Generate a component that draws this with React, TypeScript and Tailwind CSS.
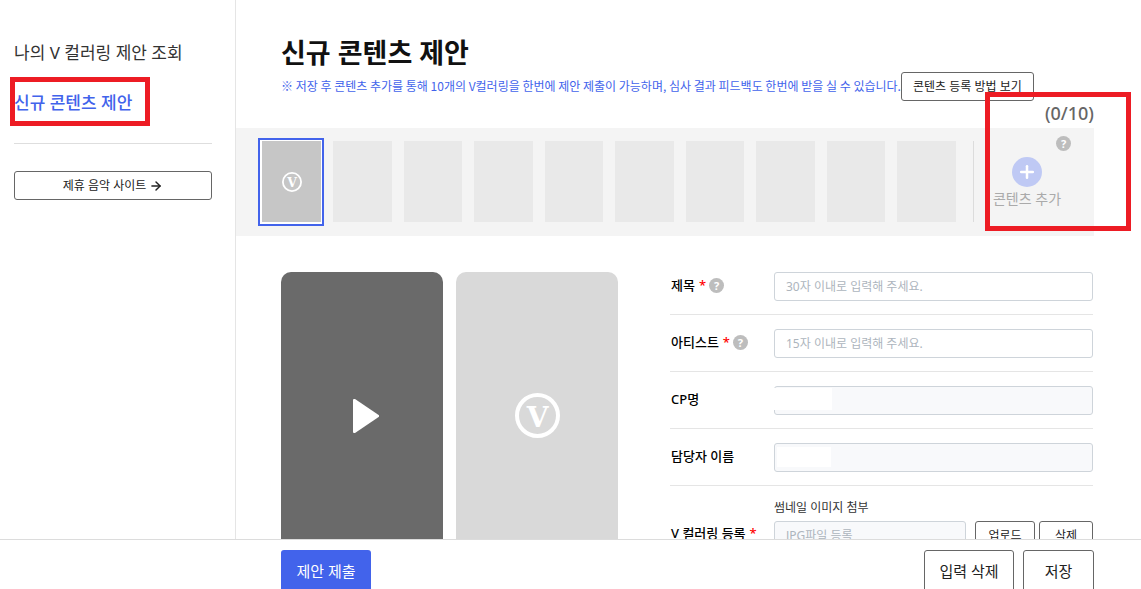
import { useState } from 'react';
import { ArrowRight, Plus } from 'lucide-react';

const EMPTY_SLOTS = 9;

/* ── Round V emblem ── */
function VLogo({ className }: { className: string }) {
  return (
    <svg viewBox="0 0 45 45" className={className} aria-hidden="true">
      <circle cx="22.5" cy="22.5" r="20.5" fill="none" stroke="#fff" strokeWidth="4" />
      <text
        x="22.5"
        y="33.5"
        textAnchor="middle"
        fill="#fff"
        fontSize="28"
        fontWeight="700"
        fontFamily="'DejaVu Serif', serif"
      >
        V
      </text>
    </svg>
  );
}

function HelpButton({ label }: { label: string }) {
  return (
    <button
      type="button"
      aria-label={label}
      className="flex size-[15px] items-center justify-center rounded-full bg-[#bdbdbd] text-[11px] leading-none font-bold text-white"
    >
      ?
    </button>
  );
}

type FieldProps = {
  id: string;
  label: string;
  required?: boolean;
  placeholder?: string;
  maskClass?: string;
};

function Field({ id, label, required, placeholder, maskClass }: FieldProps) {
  return (
    <div className="flex border-b border-[#e5e5e5] pb-[13px] pt-3.5 first:pt-0">
      <div className="flex h-[27px] w-[104px] shrink-0 items-center pl-px">
        <label htmlFor={id} className="text-[13px] font-medium text-black">
          {label}
          {required && <span className="ml-1 text-[#f00]">*</span>}
        </label>
        {required && (
          <span className="ml-[3px]">
            <HelpButton label={`${label} 도움말`} />
          </span>
        )}
      </div>
      <div className="relative min-w-0 flex-1">
        <input
          id={id}
          type="text"
          placeholder={placeholder}
          disabled={!required}
          className="block h-[29px] w-full rounded-[3px] border border-[#ced4da] bg-white px-[11px] text-xs text-[#333] placeholder:text-[#adb5bd] disabled:bg-[#f8f9fb]"
        />
        {maskClass && <span className={`absolute bg-white ${maskClass}`} />}
      </div>
    </div>
  );
}

function Sidebar() {
  return (
    <aside className="w-[236px] shrink-0 border-r border-[#e5e5e5] pl-3.5 pr-[23px] pt-[41px]">
      <nav className="flex flex-col gap-[26px] text-[17px] leading-6">
        <a href="#my" className="text-[#333]">나의 V 컬러링 제안 조회</a>
        <a href="#new" className="relative font-medium text-[#4263eb]">
          신규 콘텐츠 제안
          <span className="pointer-events-none absolute -left-1 -top-3.5 h-[49px] w-[140px] border-5 border-[#ed1c24]" />
        </a>
      </nav>
      <hr className="mb-[27px] mt-7 border-[#dedede]" />
      <a
        href="#music"
        className="flex h-[29px] items-center justify-center gap-[3px] rounded-[3px] border border-[#666] text-xs text-[#222]"
      >
        제휴 음악 사이트
        <ArrowRight size={14} strokeWidth={2.5} />
      </a>
    </aside>
  );
}

/* ── Content slots with the add button ── */
function SlotStrip() {
  const [selected, setSelected] = useState(true);

  return (
    <div className="flex h-[108px] items-start bg-[#f4f4f4] pl-[22px]">
      <button
        type="button"
        aria-label="콘텐츠 1"
        aria-pressed={selected}
        onClick={() => setSelected(true)}
        className="mt-2.5 h-[88px] w-[66px] shrink-0 border-2 border-[#4263eb] bg-white pb-0.5 pl-0.5 pr-px pt-px"
      >
        <span className="flex h-full items-center justify-center bg-[#c6c6c6]">
          <VLogo className="size-5" />
        </span>
      </button>
      <div className="ml-[9px] mt-[13px] grid h-[81px] flex-1 grid-cols-9 gap-3">
        {Array.from({ length: EMPTY_SLOTS }, (_, i) => (
          <div key={i} className="bg-[#e9e9e9]" />
        ))}
      </div>
      <div className="ml-[17px] mt-[13px] h-[81px] w-px bg-[#dcdcdc]" />
      <div className="relative flex h-full w-[120px] shrink-0 flex-col pl-5">
        <button type="button" className="mt-[29px] flex w-[66px] flex-col items-center text-sm text-[#aaa]">
          <span className="flex size-[30px] items-center justify-center rounded-full bg-[#bfc9f4] text-white">
            <Plus size={20} strokeWidth={3} />
          </span>
          <span className="mt-0.5 whitespace-nowrap">콘텐츠 추가</span>
        </button>
        <span className="absolute right-[23px] top-2">
          <HelpButton label="콘텐츠 추가 도움말" />
        </span>
        <span className="pointer-events-none absolute -right-[37px] -top-9 h-[139px] w-[146px] border-5 border-[#ed1c24]" />
      </div>
    </div>
  );
}

function Previews() {
  return (
    <div className="flex shrink-0 gap-[13px]">
      <button
        type="button"
        aria-label="재생"
        className="flex h-72 w-[162px] items-center justify-center rounded-[10px] bg-[#6a6a6a]"
      >
        <svg viewBox="0 0 26 34" className="ml-2 h-[34px] w-[26px]" aria-hidden="true">
          <path d="M1 0h1l24 16.2v1.6L2 34H1a1 1 0 0 1-1-1V1a1 1 0 0 1 1-1z" fill="#fff" />
        </svg>
      </button>
      <div className="flex h-72 w-[162px] items-center justify-center rounded-[10px] bg-[#d9d9d9] pb-px">
        <VLogo className="size-[45px]" />
      </div>
    </div>
  );
}

function ProposalForm() {
  return (
    <form id="proposal" className="ml-[52px] min-w-0 flex-1">
      <Field id="title" label="제목" required placeholder="30자 이내로 입력해 주세요." />
      <Field id="artist" label="아티스트" required placeholder="15자 이내로 입력해 주세요." />
      <Field id="cp" label="CP명" maskClass="left-0 top-0.5 h-[22px] w-[58px]" />
      <Field id="manager" label="담당자 이름" maskClass="left-[3px] top-1 h-5 w-[54px]" />
      <div className="flex pt-3">
        <label htmlFor="thumb" className="mt-[25px] w-[104px] shrink-0 pl-px text-[13px] font-medium leading-5 text-black">
          V 컬러링 등록<span className="ml-1 text-[#f00]">*</span>
        </label>
        <div className="min-w-0 flex-1">
          <p className="mb-[3px] text-xs leading-5 text-[#333]">썸네일 이미지 첨부</p>
          <div className="flex">
            <input
              id="thumb"
              type="text"
              disabled
              placeholder="JPG파일 등록"
              className="h-[29px] min-w-0 flex-1 rounded-[3px] border border-[#ced4da] bg-[#f8f9fb] px-[11px] text-xs placeholder:text-[#adb5bd]"
            />
            <button type="button" className="ml-[9px] h-[29px] w-[60px] shrink-0 rounded-[3px] border border-[#666] text-xs text-[#222]">
              업로드
            </button>
            <button type="button" className="ml-1 h-[29px] w-[54px] shrink-0 rounded-[3px] border border-[#666] text-xs text-[#222]">
              삭제
            </button>
          </div>
        </div>
      </div>
    </form>
  );
}

export default function App() {
  return (
    <div className="flex h-screen flex-col overflow-hidden bg-white font-['Noto_Sans','Noto_Sans_CJK_KR',sans-serif]">
      <div className="flex min-h-0 flex-1 overflow-hidden">
        <Sidebar />
        <main className="min-w-0 flex-1 pr-[47px]">
          <header className="pl-[45px] pt-[33px]">
            <h1 className="text-[27px] font-bold leading-[39px] text-[#111]">신규 콘텐츠 제안</h1>
            <div className="flex items-center">
              <p className="whitespace-nowrap pb-0.5 font-['Noto_Sans_CJK_KR',sans-serif] text-xs text-[#4263eb]">
                ※ 저장 후 콘텐츠 추가를 통해 10개의 V컬러링을 한번에 제안 제출이 가능하며, 심사 결과 피드백도 한번에 받을 실 수 있습니다.
              </p>
              <button
                type="button"
                className="h-[29px] w-[133px] shrink-0 whitespace-nowrap rounded-[3px] border border-[#666] text-xs text-[#222]"
              >
                콘텐츠 등록 방법 보기
              </button>
            </div>
          </header>
          <p className="mb-[3px] text-right text-lg font-medium leading-6 text-[#666]">(0/10)</p>
          <SlotStrip />
          <div className="flex pl-[45px] pr-px pt-9">
            <Previews />
            <ProposalForm />
          </div>
        </main>
      </div>

      {/* ── Bottom action bar ── */}
      <footer className="flex h-[50px] shrink-0 items-start gap-[9px] overflow-hidden border-t border-[#dcdcdc] bg-white pl-[281px] pr-[47px] pt-2.5 text-[15px]">
        <button type="submit" form="proposal" className="mr-auto h-[42px] w-[90px] shrink-0 rounded-[3px] bg-[#4263eb] text-white">
          제안 제출
        </button>
        <button type="reset" form="proposal" className="h-[42px] w-[90px] shrink-0 rounded-[3px] border border-[#666] text-[#222]">
          입력 삭제
        </button>
        <button type="button" className="h-[42px] w-[71px] shrink-0 rounded-[3px] border border-[#666] text-[#222]">
          저장
        </button>
      </footer>
    </div>
  );
}
